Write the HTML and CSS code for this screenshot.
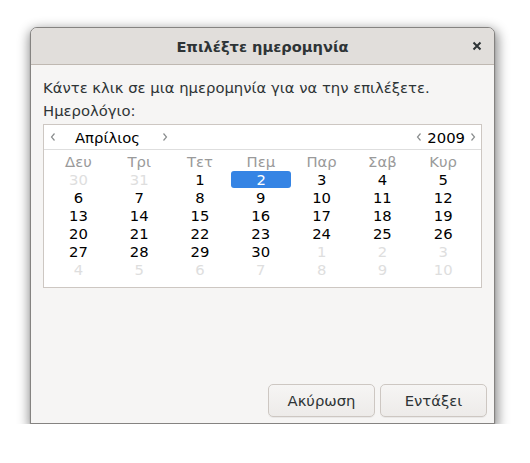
FILE: index.html
```html
<!DOCTYPE html>
<html lang="el">
<head>
<meta charset="utf-8">
<link rel="stylesheet" href="styles.css">
</head>
<body>
<div class="dialog">
  <div class="titlebar">
    <span></span>
    <span class="title">Επιλέξτε ημερομηνία</span>
    <span class="close"><svg width="10" height="10" viewBox="0 0 10 10"><path d="M1.5 1.5 L8.5 8.5 M8.5 1.5 L1.5 8.5" stroke="#2e3436" stroke-width="2" fill="none"/></svg></span>
  </div>
  <div class="content">
    <p class="line">Κάντε κλικ σε μια ημερομηνία για να την επιλέξετε.</p>
    <p class="line">Ημερολόγιο:</p>
    <div class="calendar">
      <div class="cal-head">
        <div class="nav">
          <svg class="chev" width="6" height="10" viewBox="0 0 6 10"><path d="M4.5 1.5 L1.5 5 L4.5 8.5" stroke="#8b8e8f" stroke-width="1.2" fill="none"/></svg>
          <span class="month">Απρίλιος</span>
          <svg class="chev" width="6" height="10" viewBox="0 0 6 10"><path d="M1.5 1.5 L4.5 5 L1.5 8.5" stroke="#8b8e8f" stroke-width="1.2" fill="none"/></svg>
        </div>
        <div class="nav year-nav">
          <svg class="chev" width="6" height="10" viewBox="0 0 6 10"><path d="M4.5 1.5 L1.5 5 L4.5 8.5" stroke="#8b8e8f" stroke-width="1.2" fill="none"/></svg>
          <span class="year">2009</span>
          <svg class="chev" width="6" height="10" viewBox="0 0 6 10"><path d="M1.5 1.5 L4.5 5 L1.5 8.5" stroke="#8b8e8f" stroke-width="1.2" fill="none"/></svg>
        </div>
      </div>
      <div class="grid">
        <span class="dn">Δευ</span><span class="dn">Τρι</span><span class="dn">Τετ</span><span class="dn">Πεμ</span><span class="dn">Παρ</span><span class="dn">Σαβ</span><span class="dn">Κυρ</span>
        <span class="d other">30</span><span class="d other">31</span><span class="d">1</span><span class="d sel">2</span><span class="d">3</span><span class="d">4</span><span class="d">5</span>
        <span class="d">6</span><span class="d">7</span><span class="d">8</span><span class="d">9</span><span class="d">10</span><span class="d">11</span><span class="d">12</span>
        <span class="d">13</span><span class="d">14</span><span class="d">15</span><span class="d">16</span><span class="d">17</span><span class="d">18</span><span class="d">19</span>
        <span class="d">20</span><span class="d">21</span><span class="d">22</span><span class="d">23</span><span class="d">24</span><span class="d">25</span><span class="d">26</span>
        <span class="d">27</span><span class="d">28</span><span class="d">29</span><span class="d">30</span><span class="d other">1</span><span class="d other">2</span><span class="d other">3</span>
        <span class="d other">4</span><span class="d other">5</span><span class="d other">6</span><span class="d other">7</span><span class="d other">8</span><span class="d other">9</span><span class="d other">10</span>
      </div>
    </div>
    <div class="actions">
      <button class="btn">Ακύρωση</button>
      <button class="btn">Εντάξει</button>
    </div>
  </div>
</div>
</body>
</html>
```
FILE: styles.css
```css
html, body {
  margin: 0;
  padding: 0;
  background: #ffffff;
}
body {
  font-family: "DejaVu Sans", sans-serif;
  color: #2e3436;
}
.dialog {
  margin: 27px 0 0 30px;
  width: 463px;
  height: 395px;
  border: 1px solid #858381;
  border-radius: 7px 7px 0 0;
  background: #f6f5f4;
  box-shadow: 0 1px 1px rgba(0, 0, 0, 0.4), 1px 4px 12px 2px rgba(0, 0, 0, 0.45);
  display: flex;
  flex-direction: column;
  overflow: hidden;
}
.titlebar {
  height: 36px;
  flex: none;
  background: #e1dedb;
  border-bottom: 1px solid #bfb8b1;
  display: grid;
  grid-template-columns: 1fr auto 1fr;
  align-items: center;
}
.title {
  font-weight: bold;
  font-size: 14.6px;
  color: #2e3436;
}
.close {
  justify-self: end;
  margin-right: 12px;
  display: flex;
}
.content {
  flex: 1;
  display: flex;
  flex-direction: column;
  padding: 11px 12px 6px 12px;
}
.line {
  margin: 0;
  font-size: 14.8px;
  line-height: 23px;
  color: #2e3436;
}
.calendar {
  margin-top: 2px;
  border: 1px solid #cdc7c2;
  background: #ffffff;
  height: 164px;
  box-sizing: border-box;
  display: flex;
  flex-direction: column;
}
.cal-head {
  height: 24px;
  border-bottom: 1px solid #dedede;
  display: flex;
  justify-content: space-between;
  align-items: center;
  padding: 0 5px 0 6px;
}
.nav {
  display: flex;
  align-items: center;
}
.month {
  font-size: 14.8px;
  color: #000;
  width: 106px;
  padding-left: 19px;
  box-sizing: border-box;
}
.year {
  font-size: 14.8px;
  color: #000;
  padding: 0 5px 0 5px;
}
.grid {
  display: grid;
  grid-template-columns: repeat(7, 60.8px);
  grid-auto-rows: 18px;
  padding: 3px 0 0 4px;
}
.dn, .d {
  text-align: center;
  font-size: 14.8px;
  line-height: 18px;
}
.dn {
  color: #9a9a9a;
}
.d {
  color: #000;
}
.d.other {
  color: #dedede;
}
.d.sel {
  background: #3584e4;
  color: #ffffff;
  border-radius: 3px;
  margin: 0 0 1px 1px;
  line-height: 17px;
}
.actions {
  margin-top: auto;
  display: flex;
  justify-content: flex-end;
  gap: 5px;
  margin-right: -5px;
}
.btn {
  width: 107px;
  height: 33px;
  font-family: "DejaVu Sans", sans-serif;
  font-size: 14.8px;
  color: #2e3436;
  background: linear-gradient(#f6f5f4, #edebe9);
  border: 1px solid #cdc7c2;
  border-radius: 5px;
  box-shadow: 0 1px rgba(0,0,0,0.05);
}
```
